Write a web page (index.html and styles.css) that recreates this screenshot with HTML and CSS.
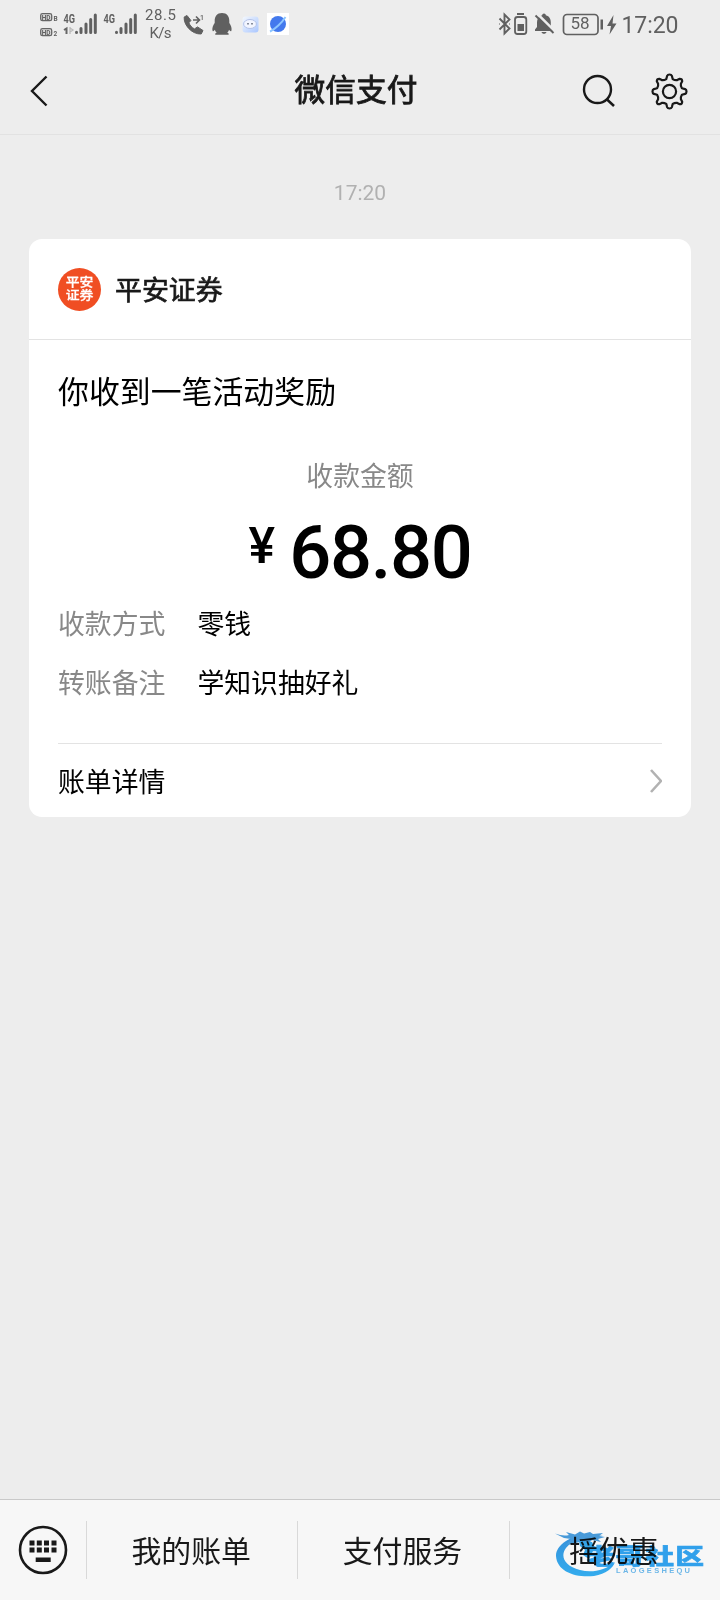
FILE: index.html
```html
<!DOCTYPE html>
<html lang="zh-CN">
<head>
<meta charset="utf-8">
<title>微信支付</title>
<link rel="stylesheet" href="styles.css">
</head>
<body>
<div class="screen">
  <div class="status">
    <svg class="status-icons" width="720" height="50" viewBox="0 0 720 50">
      <defs>
        <linearGradient id="app" x1="0" y1="0" x2="1" y2="1"><stop offset="0" stop-color="#f4f8fd"/><stop offset="1" stop-color="#a9c6ff"/></linearGradient>
      </defs>
      <g fill="#ddd" stroke="#666" stroke-width="1.300">
        <rect x="40.700" y="13.700" width="11" height="7" rx="1.800"/><rect x="40.700" y="28.700" width="11" height="7" rx="1.800"/>
      </g>
      <g class="tiny bold">
        <text x="41.800" y="19.600" textLength="8.800" lengthAdjust="spacingAndGlyphs">HD</text><text x="41.800" y="34.600" textLength="8.800" lengthAdjust="spacingAndGlyphs">HD</text>
        <text x="53.500" y="21.200">B</text><text x="53.500" y="36.200">2</text>
      </g>
      <g class="net"><text x="63.500" y="23" textLength="11.500" lengthAdjust="spacingAndGlyphs">4G</text><text x="103.500" y="23" textLength="11.500" lengthAdjust="spacingAndGlyphs">4G</text></g>
      <path d="M64 30l2.500-1.500V34" fill="none" stroke="#666" stroke-width="2"/>
      <path d="M70 27v7M70 28l3 2-3 2" fill="none" stroke="#bbb" stroke-width="1.300"/>
      <g stroke="#606060" stroke-width="3" stroke-linecap="round">
        <path d="M76.500 32.300v.3M81 28.500v4M86 24v8.500M90.700 19.500v13M95.300 15v17.500"/>
        <path d="M116.500 32.300v.3M121 28.500v4M126 24v8.500M130.700 19.500v13M135.300 15v17.500"/>
      </g>
      <g class="speed"><text x="145" y="20" textLength="31">28.5</text><text x="149.500" y="38" textLength="22">K/s</text></g>
      <path d="M187 15.500l-2.800 1.500c-.8 8 7.800 17.500 17 17l1.800-3.500-5.500-3.600-3 2c-2.800-1.300-4.700-3.700-5.600-6.100l2-2.300z" fill="#606060" stroke="#606060" stroke-linejoin="round"/>
      <path d="M193 20h6M196 16.500l3.500 3.500-3.500 3.500" fill="none" stroke="#606060" stroke-width="1.600"/>
      <text class="tiny" x="200" y="20">1</text>
      <path d="M222 13c5 0 7.300 3.500 7.300 8v2c1.500 2 3 5.500 2 8-.6.700-1.500-.2-2.300-1.200-.4 1.500-1 2.200-1.800 3 2 .6 2.200 2 .8 2h-12c-1.600 0-1.200-1.400.8-2-1-.8-1.500-1.700-1.900-3-.8 1-1.600 1.800-2.200 1.200-1-2.500.5-6 2-8v-2c0-4.500 2.300-8 7.300-8z" fill="#606060"/>
      <rect x="242.500" y="16.500" width="16" height="16" rx="3" fill="url(#app)"/>
      <ellipse cx="250" cy="24" rx="6.400" ry="4.500" fill="#f2f5ff" stroke="#b3c2e8"/>
      <path d="M248 23v1.500M252 23v1.500" stroke="#4e5668" stroke-width="1.300"/>
      <path d="M267 13h22v22h-22z" fill="#fff"/>
      <circle cx="278" cy="24" r="8" fill="#4379ed"/><path d="M270 31.500c5-2 12-9 15.500-14.500" stroke="#8dc6ff" stroke-width="2" fill="none"/>

      <path d="M499.500 18.500l10 10-5 5V14.500l5 5-10 10M499 24h.5M509.500 24h.5" fill="none" stroke="#606060" stroke-width="1.900"/>
      <rect x="515" y="17" width="11.300" height="17" rx="2.500" fill="none" stroke="#606060" stroke-width="1.800"/>
      <path d="M517 13h7v2h-7zM517.500 24h6.500v7h-6.500z" fill="#606060"/>
      <path d="M544 13.500c1 0 1.700.8 1.800 1.800 3.700 1 5 4 5 7V27l2.200 2.500v1.500h-18v-1.500l2-2.500v-4.700c0-3 1.800-6 5.200-7 .1-1 .8-1.800 1.800-1.800zM541.500 32h5c-.3 2.400-4.700 2.400-5 0z" fill="#606060"/>
      <path d="M537.500 14l17 17" stroke="#ededed" stroke-width="2.500"/><path d="M535.500 15.500l18 17.500" stroke="#606060" stroke-width="1.900"/>
      <rect x="563.500" y="14.500" width="34.500" height="20" rx="3.500" fill="none" stroke="#606060" stroke-width="1.700"/>
      <text class="battery" x="580" y="29" text-anchor="middle">58</text>
      <path d="M600.500 19.500h2.500v10h-2.500z" fill="#606060"/>
      <path d="M613.500 15l-6.500 11h4l-1.500 8.500 7-11h-4z" fill="#606060"/>
      <text class="clock" x="621.500" y="33" textLength="57">17:20</text>
    </svg>
  </div>

  <header class="header">
    <svg class="back" width="18" height="32" viewBox="0 0 18 32"><path d="M16.500 1.500L2 16l14.500 14.500" fill="none" stroke="#191919" stroke-width="2.400"/></svg>
    <h1 class="title">微信支付</h1>
    <div class="actions">
      <svg width="36" height="36" viewBox="0 0 36 36"><circle cx="16.500" cy="16.500" r="13.500" fill="none" stroke="#191919" stroke-width="2.400"/><path d="M25.500 26l7.500 7" stroke="#191919" stroke-width="2.500"/></svg>
      <svg width="38" height="38" viewBox="-19.500 -19.500 38 38" fill="none" stroke="#191919" stroke-width="2.200" stroke-linejoin="round"><path d="M-2.400-15.600Q-1.800-17 0-17T2.400-15.600L3.200-12.400Q5.700-10.900 7.700-11.400L10.200-12.700Q11.500-12.700 12.100-12.100T12.700-10.200L11.400-7.700Q10.900-5.700 12.400-3.200L15.600-2.400Q17-1.800 17 0T15.600 2.400L12.400 3.200Q10.900 5.700 11.400 7.700L12.700 10.200Q12.700 11.500 12.100 12.100T10.200 12.700L7.700 11.400Q5.700 10.900 3.200 12.400L2.400 15.600Q1.800 17 0 17T-2.400 15.600L-3.200 12.400Q-5.700 10.900-7.700 11.400L-10.200 12.700Q-11.500 12.700-12.100 12.100T-12.700 10.200L-11.400 7.700Q-10.900 5.700-12.400 3.200L-15.600 2.400Q-17 1.800-17 0T-15.600-2.400L-12.400-3.200Q-10.900-5.700-11.400-7.700L-12.700-10.200Q-12.700-11.500-12.100-12.100T-10.200-12.700L-7.700-11.400Q-5.700-10.900-3.200-12.400Z"/><circle r="6.600"/></svg>
    </div>
  </header>

  <main class="chat">
    <time class="stamp">17:20</time>
    <section class="card">
      <div class="merchant">
        <div class="avatar"><span>平安</span><span>证券</span></div>
        <span class="merchant-name">平安证券</span>
      </div>
      <div class="body">
        <div class="headline">你收到一笔活动奖励</div>
        <div class="label amount-label">收款金额</div>
        <div class="amount"><span class="yen">¥</span><span class="value">68.80</span></div>
        <div class="row"><span class="label">收款方式</span><span>零钱</span></div>
        <div class="row"><span class="label">转账备注</span><span>学知识抽好礼</span></div>
        <div class="detail">
          <span>账单详情</span>
          <svg width="13" height="26" viewBox="0 0 13 26"><path d="M2 2l10 11L2 24" fill="none" stroke="#b2b2b2" stroke-width="2.600"/></svg>
        </div>
      </div>
    </section>
  </main>

  <nav class="menu">
    <div class="keyboard">
      <svg width="50" height="50" viewBox="-25 -25 50 50"><circle r="23" fill="none" stroke="#191919" stroke-width="2.600"/><path d="M-13.500-9.500h5v5h-5zM-6.200-9.500h5v5h-5zM1-9.500h5v5H1zM8.500-9.500h5v5h-5zM-13.500-2.500h5v5h-5zM-6.200-2.500h5v5h-5zM1-2.500h5v5H1zM8.500-2.500h5v5h-5zM-7.300 7.500H7.700v4.500h-15z" fill="#191919"/></svg>
    </div>
    <div class="item">我的账单</div>
    <div class="item">支付服务</div>
    <div class="item">摇优惠</div>
    <svg class="watermark" width="160" height="60" viewBox="550 1520 160 60">
      <defs><linearGradient id="ring" x1="0" y1="0" x2="0" y2="1"><stop offset="0" stop-color="#3795e2"/><stop offset="1" stop-color="#35b2f6"/></linearGradient></defs>
      <path d="M603 1536C576 1531 556 1543 556 1556C557 1572 576 1578 594 1576C606 1574 613 1568 615 1562C605 1571 591 1573 580 1570C564 1566 560 1556 566 1548C572 1540 585 1537 603 1536Z" fill="url(#ring)"/>
      <path d="M555 1533.500q8 3 14 1.500l-3-3 9 2.500 5-3 4 2 6-1.500 3 2 10-1-4 3 6 1-7 2 3 3-9-2-4 4-8-2-14 3 5-6-7-1z" fill="#4a9fe0"/>
      <path d="M579 1541l13 1 2 4 5 2-6 3-4 8-6-4 2-5-5-4z" fill="#35a9f0"/>
      <g class="brand" transform="translate(0 1564) scale(1 .76)"><text x="587" y="0">老</text><text x="615.500" y="0">哥</text><text x="645.500" y="0">社</text><text x="675.500" y="0">区</text></g>
      <text class="brand-en" x="616" y="1572.700" textLength="74">LAOGESHEQU</text>
    </svg>
  </nav>
</div>
</body>
</html>
```
FILE: styles.css
```css
* { box-sizing: border-box; }
body {
  margin: 0;
  background: #ededed;
  color: #000;
  font-family: "Noto Sans CJK SC", sans-serif;
}
.screen {
  width: 720px;
  height: 1600px;
  display: flex;
  flex-direction: column;
  overflow: hidden;
}
.status { height: 50px; }
.status-icons { display: block; font-family: Roboto, sans-serif; }
.status-icons text { fill: #606060; }
.tiny { font-size: 7px; font-weight: 500; }
.tiny.bold { font-weight: 700; font-size: 6.5px; }
.net { font-size: 12.5px; font-weight: 700; }
.speed { font-size: 15px; }
.battery { font-size: 17px; }
.clock { font-size: 23px; }

.header {
  height: 85px;
  flex: none;
  padding: 0 32px 3px 30px;
  display: grid;
  grid-template-columns: 1fr auto 1fr;
  align-items: center;
  border-bottom: 1px solid #e2e2e2;
  color: #191919;
}
.title {
  margin: 0;
  padding: 0 6px 5px 0;
  font-size: 30.7px;
  line-height: 40px;
  font-weight: 400;
  -webkit-text-stroke: 0.8px #191919;
}
.actions { display: flex; justify-content: flex-end; align-items: center; gap: 33px; }

.chat { flex: 1; padding: 43px 29px 0; }
.stamp {
  display: block;
  height: 61px;
  text-align: center;
  font: 21px/31px Roboto, sans-serif;
  color: #b1b1b1;
}
.card { height: 578px; background: #fff; border-radius: 13px; }
.merchant {
  height: 101px;
  padding: 0 29px;
  display: flex;
  align-items: center;
  gap: 14px;
  border-bottom: 1px solid #e3e3e3;
}
.avatar {
  width: 43px;
  height: 43px;
  border-radius: 50%;
  background: #f04e23;
  color: #fff;
  display: flex;
  flex-direction: column;
  align-items: center;
  justify-content: center;
  font-size: 13.8px;
  line-height: 13px;
  font-weight: 500;
  -webkit-text-stroke: 0.3px #fff;
}
.avatar span { transform: scaleY(0.88); }
.merchant-name {
  font-size: 26.9px;
  line-height: 40px;
  color: #191919;
  -webkit-text-stroke: 0.7px #191919;
}
.body { padding: 30px 29px 0; font-size: 26.85px; line-height: 40px; }
.headline { font-size: 30.9px; height: 85px; }
.label { color: #888; }
.amount-label { text-align: center; height: 49px; }
.amount { display: flex; justify-content: center; height: 99px; font-family: Roboto, sans-serif; font-weight: 500; }
.yen { font-size: 50px; line-height: 85px; margin-right: 14px; }
.value { font-size: 74px; line-height: 97px; letter-spacing: -1.3px; }
.row { display: flex; gap: 32px; height: 59px; }
.detail {
  margin-top: 22px;
  height: 75px;
  border-top: 1px solid #e3e3e3;
  display: flex;
  align-items: center;
  justify-content: space-between;
}

.menu {
  position: relative;
  flex: none;
  height: 101px;
  border-top: 1px solid #c9c9c9;
  background: #f7f7f7;
  color: #191919;
  display: flex;
  align-items: center;
}
.keyboard { width: 86px; padding-left: 18px; display: flex; }
.item {
  flex: 1;
  height: 58px;
  padding-right: 2px;
  border-left: 1px solid #d9d9d9;
  text-align: center;
  font-size: 29.9px;
  line-height: 57px;
}
.watermark { position: absolute; left: 550px; top: 20px; mix-blend-mode: multiply; }
.brand { font-family: "Noto Sans CJK SC", sans-serif; font-size: 28.5px; font-weight: 900; fill: #32a5f3; stroke: #32a5f3; stroke-width: 0.8px; }
.brand-en { font-family: "Liberation Sans", sans-serif; font-size: 7.5px; font-weight: 700; fill: #70bdf0; }
```
